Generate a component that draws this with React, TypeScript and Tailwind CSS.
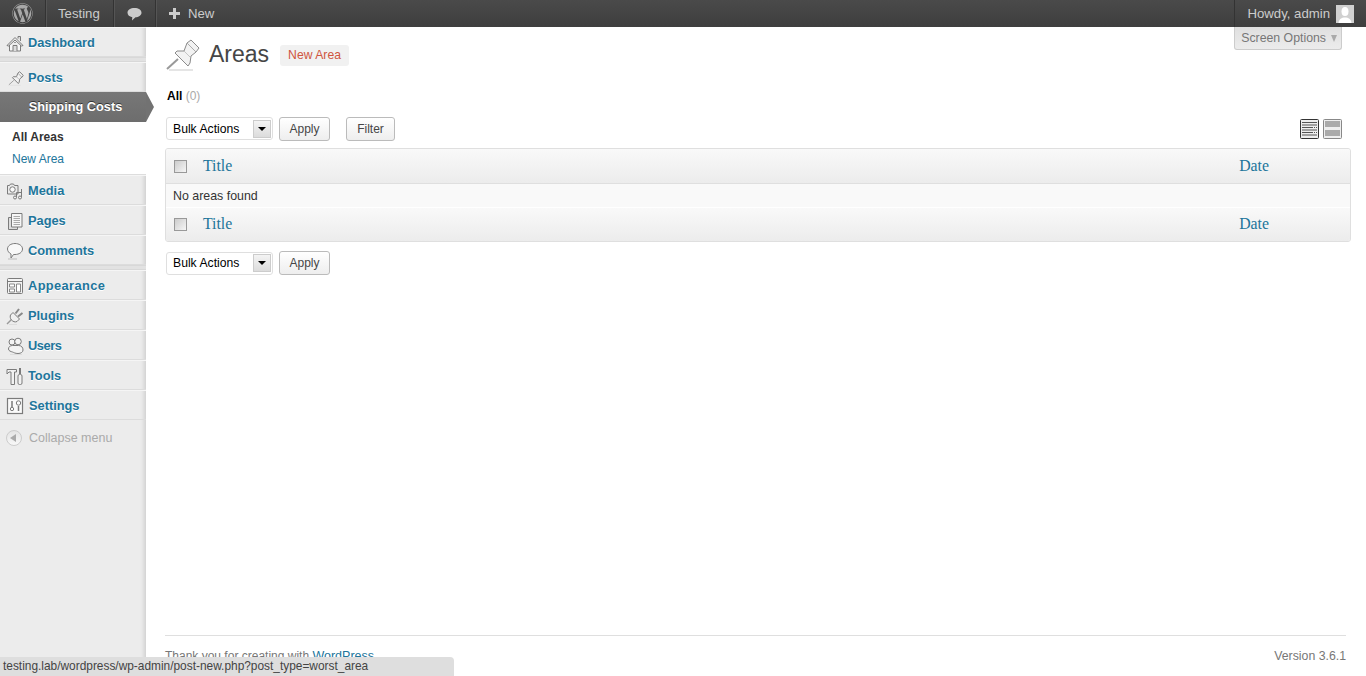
import { FaWordpress } from "react-icons/fa";

const sans = "font-['Liberation_Sans',Arial,sans-serif]";

function Svg({ children }: { children: React.ReactNode }) {
  return (
    <svg width="18" height="18" viewBox="0 0 18 18" fill="none" stroke="#7b7b7b" strokeWidth="1" className="shrink-0">
      {children}
    </svg>
  );
}

// same thumbtack for the page title and the Posts menu entry
function Pin() {
  return (
    <>
      <path d="M5 34h24" stroke="#ddd" strokeWidth="1.500" />
      <path d="M3 33 14 23" stroke="#999" strokeWidth="2" />
      <path d="M23 7 27 4l8 8-3 4-5 4-1 7-2 3-13-13 2-2 7 0z" fill="#f2f2f2" />
      <path d="M23 7 32 16" stroke="#aaa" />
      <path d="M20 15 26 21" stroke="#c4c4c4" />
    </>
  );
}

const icons: Record<string, React.ReactNode> = {
  dashboard: (
    <Svg>
      <path d="M12 4.500V2.500h2.500v4.500" fill="#ddd" />
      <path d="M1 11.500 9 3.500l8 8-1.500.5L9 6 2.500 12z" fill="#eee" />
      <path d="M3.500 11v6h11v-6" fill="#f7f7f7" />
      <path d="M7 17v-5.500h4V17" fill="#ddd" />
      <path d="M8 8.500h2" stroke="#999" />
    </Svg>
  ),
  posts: (
    <Svg>
      <g transform="translate(1.500 1) scale(.45)" strokeWidth="2.200">
        <Pin />
      </g>
    </Svg>
  ),
  media: (
    <Svg>
      <path d="M1.500 3.500h2l1-1.500h3l1 1.500h3.500v8.500h-10.500z" fill="#eaeaea" />
      <circle cx="6.500" cy="7.500" r="2.700" fill="#fafafa" />
      <path d="M15.500 7v8.500M10.500 10.500v5M10.500 10.500h5" />
      <circle cx="14" cy="15.500" r="1.500" fill="#eee" />
      <circle cx="9" cy="15.500" r="1.500" fill="#eee" />
    </Svg>
  ),
  pages: (
    <Svg>
      <path d="M2.500 5.500h9v12h-9z" fill="#dcdcdc" />
      <path d="M5.500 1.500h10.500v13.500h-10.500z" fill="#f6f6f6" />
      <path d="M7.500 4.500h6.500M7.500 6.500h6.500M7.500 8.500h6.500M7.500 10.500h6.500M7.500 12.500h6.500" stroke="#aaa" />
    </Svg>
  ),
  comments: (
    <Svg>
      <path d="M9 1.500c4 0 7.500 2.200 7.500 5.500S13 12.500 9 12.500H7.500L5 16v-4C3 11 1.500 9 1.500 7 1.500 3.700 5 1.500 9 1.500z" fill="#f8f8f8" />
      <path d="M2 17h9" stroke="#bbb" />
    </Svg>
  ),
  appearance: (
    <Svg>
      <rect x="1.500" y="1.500" width="15" height="15" rx="1" fill="#f4f4f4" />
      <path d="M1.500 4.500h15" />
      <path d="M3.500 7h5v3h-5zM3.500 12h5v3h-5zM10.500 7h4v8h-4z" stroke="#888" fill="#fff" />
    </Svg>
  ),
  plugins: (
    <Svg>
      <path d="M7 5.500 13.500 12 11 14.500c-2 1-4 0-5.500-1.500S4 9 4.500 8z" fill="#f0f0f0" />
      <path d="M9.500 6.500 13 2M12 9.500l4.500-3.500" strokeWidth="2" stroke="#888" />
      <path d="M5.500 12.500 1 17" strokeWidth="1.500" stroke="#999" />
      <path d="M3 17.500h8" stroke="#ddd" />
    </Svg>
  ),
  users: (
    <Svg>
      <circle cx="6" cy="5" r="3" fill="#f4f4f4" />
      <circle cx="12" cy="4.500" r="3.300" fill="#f4f4f4" />
      <path d="M2.500 12c0-2 1.500-3.500 4-3.500h6c3 0 4.500 2 4.500 4.500 0 2-2 3.500-5 3.500-3 0-4-1-5.500-1.500S2.500 14 2.500 12z" fill="#f4f4f4" />
      <path d="M4 17.500h12" stroke="#ddd" />
    </Svg>
  ),
  tools: (
    <Svg>
      <path d="M1 2.500h9.500v2.500H8.500v12.500H5V5H3L1 7z" fill="#f2f2f2" />
      <path d="M14 1v6" strokeWidth="2" />
      <rect x="12" y="7.500" width="4" height="10" rx="1.500" fill="#f2f2f2" />
    </Svg>
  ),
  settings: (
    <Svg>
      <rect x="1.500" y="1.500" width="15" height="15" fill="#fafafa" strokeWidth="1.200" />
      <path d="M6 4v6M12.500 9v5" strokeWidth="1.500" />
      <circle cx="6" cy="12" r="1.700" />
      <circle cx="12.500" cy="6" r="2.200" />
    </Svg>
  ),
};

function MenuItem({ icon, label, textClass = "" }: { icon: string; label: string; textClass?: string }) {
  return (
    <a className="flex h-[30px] items-center gap-[4px] border-t border-t-[#f5f5f5] border-b border-b-[#dcdcdc] pl-[6px] pt-[1px] cursor-pointer">
      {icons[icon]}
      <span className={`text-[12.800px] font-bold text-[#21759b] [text-shadow:0_1px_0_#fff] ${textClass}`}>{label}</span>
    </a>
  );
}

function Separator() {
  return <div className="h-[5px] border-y border-[#d8d8d8] bg-[#e2e2e2]" />;
}

function BulkActions() {
  return (
    <div className="flex h-[23px] w-[107px] items-center justify-between rounded-[3px] border border-[#dfdfdf] bg-white pl-[6px] pr-[1px] text-[12.200px] text-black">
      <span className="pt-[1px]">Bulk Actions</span>
      <span className="flex h-[18px] w-[18px] items-center justify-center border border-[#ccc] bg-gradient-to-b from-[#f4f4f4] to-[#dcdcdc]">
        <span className="h-0 w-0 border-x-[4px] border-t-[4px] border-x-transparent border-t-black" />
      </span>
    </div>
  );
}

function Btn({ label, width }: { label: string; width: string }) {
  return (
    <button className={`h-[24px] ${width} rounded-[3px] border border-[#bbb] bg-gradient-to-b from-white to-[#eee] text-[12px] text-[#464646]`}>
      {label}
    </button>
  );
}

function Check() {
  return <span className="size-[13px] shrink-0 border border-[#999] bg-gradient-to-br from-[#ccc] to-[#f6f6f6]" />;
}

function HeadRow({ extra }: { extra: string }) {
  return (
    <div className={`flex items-center bg-gradient-to-b from-[#f9f9f9] to-[#ececec] pl-[8px] pr-[81px] ${extra}`}>
      <Check />
      <span className="ml-[16px] mt-[-1px] flex-1 font-['Liberation_Serif',serif] text-[15.800px] text-[#21759b]">Title</span>
      <span className="mt-[-1px] font-['Liberation_Serif',serif] text-[15.800px] text-[#21759b]">Date</span>
    </div>
  );
}

export default function App() {
  return (
    <div className={`relative flex h-[676px] flex-col overflow-hidden bg-white ${sans}`}>
      {/* Admin bar */}
      <header className="flex h-[27px] shrink-0 items-stretch bg-gradient-to-b from-[#4a4a4a] to-[#3e3e3e] text-[13.200px] text-[#ccc]">
        <div className="flex w-[46px] items-center justify-center border-r border-r-[#333] shadow-[1px_0_0_#555]">
          <FaWordpress size={21} color="#a8a8a8" className="mr-[1px]" />
        </div>
        <div className="flex w-[68px] items-center pl-[12px] border-r border-r-[#333] shadow-[1px_0_0_#555]">Testing</div>
        <div className="flex w-[42px] items-center justify-center border-r border-r-[#333] shadow-[1px_0_0_#555]">
          <svg width="15" height="14" viewBox="0 0 15 14" fill="#ccc">
            <path d="M7.500 1C11.500 1 14.500 2.800 14.500 5.800 14.500 8.500 11.500 10.300 8.500 10.300L5 13.500 5.300 10.200C2.500 9.800.5 8 .5 5.800.5 2.800 3.500 1 7.500 1z" />
          </svg>
        </div>
        <div className="flex items-center gap-[8px] pl-[13px]">
          <svg width="11" height="11" viewBox="0 0 11 11" fill="#ccc">
            <path d="M4 0h3v4h4v3H7v4H4V7H0V4h4z" />
          </svg>
          New
        </div>
        <div className="ml-auto flex items-center gap-[6px] border-l border-l-[#333] pl-[12px] pr-[12px]">
          Howdy, admin
          <span className="flex size-[18px] items-end justify-center overflow-hidden bg-[#d0d0d0]">
            <svg width="18" height="18" viewBox="0 0 18 18" fill="#fff">
              <ellipse cx="9" cy="6.500" rx="3.500" ry="4.500" />
              <path d="M2.500 18c.5-4 3-5.500 6.500-5.500s6 1.500 6.500 5.500z" />
            </svg>
          </span>
        </div>
      </header>

      <div className="flex min-h-0 flex-1">
        {/* Sidebar */}
        <aside className="relative z-10 w-[146px] shrink-0 bg-[#ececec] shadow-[inset_-4px_0_4px_-2px_rgba(0,0,0,0.12)]">
          <MenuItem icon="dashboard" label="Dashboard" />
          <Separator />
          <MenuItem icon="posts" label="Posts" />
          <div className="relative flex h-[30px] items-center justify-center bg-gradient-to-b from-[#777] to-[#6d6d6d] pl-[5px] text-[12.750px] font-bold text-white [text-shadow:0_-1px_0_#333]">
            Shipping Costs
            <span className="absolute left-full top-0 h-0 w-0 border-y-[15px] border-l-[8px] border-y-transparent border-l-[#727272]" />
          </div>
          <div className="flex h-[53px] flex-col justify-center gap-[7px] border-b border-b-[#ddd] bg-white pl-[12px] text-[12px] leading-[15px]">
            <span className="font-bold text-[#333]">All Areas</span>
            <span className="text-[#21759b]">New Area</span>
          </div>
          <MenuItem icon="media" label="Media" />
          <MenuItem icon="pages" label="Pages" />
          <MenuItem icon="comments" label="Comments" />
          <Separator />
          <MenuItem icon="appearance" label="Appearance" textClass="tracking-[0.4px]" />
          <MenuItem icon="plugins" label="Plugins" />
          <MenuItem icon="users" label="Users" textClass="tracking-[-0.4px]" />
          <MenuItem icon="tools" label="Tools" />
          <MenuItem icon="settings" label="Settings" textClass="ml-[1px]" />
          <div className="flex h-[36px] items-center gap-[7px] pl-[6px] text-[12.500px] text-[#aaa]">
            <span className="flex size-[16px] items-center justify-center rounded-full border border-[#ccc] bg-gradient-to-b from-[#e4e4e4] to-[#f8f8f8]">
              <span className="mr-[2px] h-0 w-0 border-y-[4px] border-r-[6px] border-y-transparent border-r-[#aaa]" />
            </span>
            Collapse menu
          </div>
        </aside>

        {/* Content */}
        <main className="relative flex min-w-0 flex-1 flex-col pl-[19px] pr-[15px]">
          <div className="absolute right-[24px] top-0 flex h-[23px] items-center gap-[5px] rounded-b-[3px] border border-t-0 border-[#ccc] bg-gradient-to-b from-[#dfdfdf] to-[#ececec] pl-[6px] pr-[4px] text-[12.300px] text-[#777]">
            Screen Options
            <span className="h-0 w-0 shrink-0 border-x-[3.500px] border-t-[7px] border-x-transparent border-t-[#aaa]" />
          </div>

          <div className="flex h-[50px] shrink-0 items-center pt-[4px]">
            <svg width="40" height="40" viewBox="0 0 40 40" fill="none" stroke="#8a8a8a" className="ml-[-1px] mt-[4px] shrink-0">
              <Pin />
            </svg>
            <h1 className="ml-[5px] text-[23px] leading-none text-[#464646]">Areas</h1>
            <span className="ml-[11px] mt-[2px] flex h-[21px] items-center rounded-[3px] bg-[#f1f1f1] px-[8px] text-[12.200px] text-[#cf5540]">
              New Area
            </span>
          </div>

          <div className="mt-[11px] ml-[2px] text-[12px] leading-[16px] text-[#aaa]">
            <span className="font-bold text-black">All</span> (0)
          </div>

          <div className="mt-[12px] flex items-center pl-[1px]">
            <BulkActions />
            <div className="ml-[6px]"><Btn label="Apply" width="w-[51px]" /></div>
            <div className="ml-[16px]"><Btn label="Filter" width="w-[49px]" /></div>
            <div className="ml-auto mr-[9px] flex gap-[4px]">
              <svg width="19" height="20" viewBox="0 0 19 20" fill="none">
                <rect x=".5" y=".5" width="18" height="19" rx="1" fill="#eee" stroke="#333" />
                <path d="M2 3.500h15M2 6h15M2 8.500h11M2 11h15M2 13.500h11M2 16h15" stroke="#555" />
                <path d="M14 8.500h3M14 13.500h3" stroke="#555" strokeDasharray="1 1" />
              </svg>
              <svg width="19" height="20" viewBox="0 0 19 20" fill="none">
                <rect x=".5" y=".5" width="18" height="19" rx="1" fill="#eee" stroke="#888" />
                <path d="M2 2h15v6H2zM2 11h15v6H2z" fill="#aaa" />
              </svg>
            </div>
          </div>

          <div className="mt-[7px] overflow-hidden rounded-[3px] border border-[#dfdfdf] bg-[#f9f9f9]">
            <HeadRow extra="h-[35px] border-b border-b-[#dfdfdf]" />
            <div className="flex h-[24px] items-center border-b border-b-white pl-[7px] pt-[1px] text-[12.400px] text-[#333]">No areas found</div>
            <HeadRow extra="h-[33px]" />
          </div>

          <div className="mt-[9px] flex items-center gap-[6px] pl-[1px]">
            <BulkActions />
            <Btn label="Apply" width="w-[51px]" />
          </div>

          <footer className="mt-auto mr-[5px] flex h-[41px] justify-between border-t border-t-[#dfdfdf] pt-[12px] text-[12.300px] leading-[16px] text-[#777]">
            <span className="text-[12px]">
              Thank you for creating with <span className="text-[12.500px] text-[#21759b]">WordPress</span>.
            </span>
            <span>Version 3.6.1</span>
          </footer>
        </main>
      </div>

      {/* Browser status bubble */}
      <div className="absolute bottom-0 left-0 z-20 flex h-[19px] w-[454px] items-center rounded-tr-[4px] bg-[#dedede] pl-[3px] pt-[1px] text-[11.900px] text-[#444]">
        testing.lab/wordpress/wp-admin/post-new.php?post_type=worst_area
      </div>
    </div>
  );
}
